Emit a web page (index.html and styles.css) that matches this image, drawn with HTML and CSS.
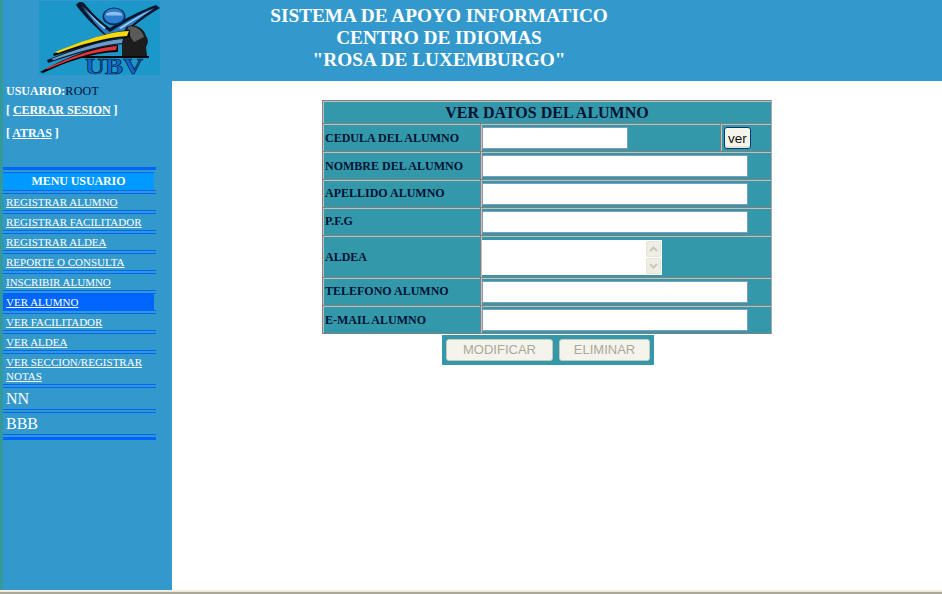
FILE: index.html
```html
<!DOCTYPE html>
<html lang="es">
<head>
<meta charset="utf-8">
<title>Ver datos del alumno</title>
<link rel="stylesheet" href="styles.css">
</head>
<body>
<div class="page">
  <header class="top">
    <svg class="logo" viewBox="39 1 121 74" width="121" height="74" role="img" aria-label="UBV">
      <rect x="39" y="1" width="121" height="74" fill="#1b98c9"/>
      <path d="M76 5 C78 2 81 1 84 3 C92 13 101 22 110 28 C124 19 142 10 156 5 L160 8 C148 15 134 25 122 36 L108 38 C96 28 84 16 76 5Z" fill="#08162e"/>
      <path d="M81 5 C90 15 100 25 110 32 C124 23 140 13 155 8 C142 16 130 26 120 36 L109 37 C98 28 89 16 81 5Z" fill="#2a7cc6"/>
      <path d="M83 6 C90 14 98 22 106 28 L104 29 C96 22 89 14 83 6Z M153 9 C142 14 130 21 119 28 L121 29 C131 22 143 15 153 9Z" fill="#a4cdea"/>
      <ellipse cx="114" cy="16.500" rx="11.500" ry="9" fill="#0b2a5a"/>
      <ellipse cx="114" cy="16" rx="10" ry="7.500" fill="#2b7fce"/>
      <path d="M106 14 C109 11 119 11 122 14 L122 15.500 L106 15.500Z" fill="#8fc0ea"/>
      <path d="M126 27 C135 23 144 28 146 36 C149 40 148 44 146 47 L147 56 L122 56 L122 38Z" fill="#1d1d1d"/>
      <path d="M128 27 C135 25 142 30 144 37 L134 42 C130 37 128 32 128 27Z" fill="#5a5a5a"/>
      <path d="M53 54 C74 45 104 32 130 30 L130 37 C106 39 78 48 54 56Z" fill="#0a0a0a"/>
      <path d="M55 52 C76 44 104 32 129 31 L127 36 C106 37 80 45 58 53Z" fill="#f4d90e"/>
      <path d="M47 60 C70 50 100 39 124 38 L123 44 C100 46 72 55 48 63Z" fill="#0b1a2e"/>
      <path d="M51 59 C72 51 100 41 123 39 L122 43 C100 45 74 53 54 60Z" fill="#6a9ccb"/>
      <path d="M40 72 C62 60 92 46 118 45 L118 52 C94 52 66 62 43 73Z" fill="#090909"/>
      <path d="M45 69 C64 60 92 48 117 46 L116 50 C94 51 68 60 48 69Z" fill="#e2343c"/>
      <rect x="83" y="56" width="66" height="2" fill="#090909"/>
      <text class="logo-mark" x="85" y="73.500" textLength="58" lengthAdjust="spacingAndGlyphs">UBV</text>
    </svg>
    <h1 class="system-title">SISTEMA DE APOYO INFORMATICO<br>CENTRO DE IDIOMAS<br>"ROSA DE LUXEMBURGO"</h1>
  </header>
  <div class="body-row">
    <aside class="side">
      <div class="user"><strong>USUARIO:</strong><span class="user-name">ROOT</span></div>
      <div class="session">[ <a href="#">CERRAR SESION</a> ]</div>
      <div class="session back">[ <a href="#">ATRAS</a> ]</div>
      <nav class="menu">
        <div class="menu-title">MENU USUARIO</div>
        <a class="menu-item" href="#">REGISTRAR ALUMNO</a>
        <a class="menu-item" href="#">REGISTRAR FACILITADOR</a>
        <a class="menu-item" href="#">REGISTRAR ALDEA</a>
        <a class="menu-item" href="#">REPORTE O CONSULTA</a>
        <a class="menu-item" href="#">INSCRIBIR ALUMNO</a>
        <a class="menu-item active" href="#">VER ALUMNO</a>
        <a class="menu-item" href="#">VER FACILITADOR</a>
        <a class="menu-item" href="#">VER ALDEA</a>
        <a class="menu-item tall" href="#">VER SECCION/REGISTRAR NOTAS</a>
        <div class="menu-item big">NN</div>
        <div class="menu-item big">BBB</div>
        <div class="menu-end"></div>
      </nav>
    </aside>
    <main class="content">
      <table class="form-table">
        <colgroup><col class="c1"><col class="c2"><col class="c3"></colgroup>
        <tr class="r-title"><th colspan="3">VER DATOS DEL ALUMNO</th></tr>
        <tr><td class="label low">CEDULA DEL ALUMNO</td><td><input class="field short" type="text"></td><td class="btn-cell"><button class="ver" type="button">ver</button></td></tr>
        <tr><td class="label low">NOMBRE DEL ALUMNO</td><td colspan="2"><input class="field" type="text"></td></tr>
        <tr><td class="label">APELLIDO ALUMNO</td><td colspan="2"><input class="field" type="text"></td></tr>
        <tr><td class="label">P.F.G</td><td colspan="2"><input class="field" type="text"></td></tr>
        <tr class="r-area"><td class="label low">ALDEA</td><td colspan="2">
          <div class="area">
            <textarea class="area-text"></textarea>
            <div class="scroll">
              <span class="scroll-btn"><svg viewBox="0 0 9 6" width="9" height="6"><path d="M1 5 L4.500 1.500 L8 5" fill="none" stroke="#c9c7ba" stroke-width="2"/></svg></span>
              <span class="scroll-btn"><svg viewBox="0 0 9 6" width="9" height="6"><path d="M1 1 L4.500 4.500 L8 1" fill="none" stroke="#c9c7ba" stroke-width="2"/></svg></span>
            </div>
          </div>
        </td></tr>
        <tr><td class="label">TELEFONO ALUMNO</td><td colspan="2"><input class="field" type="text"></td></tr>
        <tr><td class="label low">E-MAIL ALUMNO</td><td colspan="2"><input class="field" type="text"></td></tr>
      </table>
      <div class="actions">
        <button class="act mod" type="button" disabled>MODIFICAR</button>
        <button class="act del" type="button" disabled>ELIMINAR</button>
      </div>
    </main>
  </div>
  <footer class="bottom"></footer>
</div>
</body>
</html>
```

FILE: styles.css
```css
* { box-sizing: border-box; }
html, body { margin: 0; padding: 0; height: 100%; overflow: hidden; background: #fff; }
body { font-family: "Liberation Serif", "Times New Roman", serif; }

.page { width: 942px; height: 594px; display: flex; flex-direction: column; }

.top {
  height: 81px;
  flex: none;
  background: #3399cc;
  border-left: 3px solid #339999;
  display: flex;
  padding: 1px 0 0 36px;
}
.logo { display: block; flex: none; overflow: visible; }
.logo-mark {
  font-family: "Liberation Serif", serif;
  font-weight: 700;
  font-size: 23px;
  fill: #0b6ad8;
  stroke: #050d1a;
  stroke-width: .6px;
}
.system-title {
  width: 558px;
  margin: 4px 0 0;
  text-align: center;
  color: #fff;
  font-size: 19.3px;
  line-height: 22px;
  font-weight: 700;
}

.body-row { flex: 1; display: flex; min-height: 0; }

.side {
  width: 172px;
  flex: none;
  background: #3399cc;
  border-left: 3px solid #339999;
  padding: 3px 0 0;
  color: #fff;
  font-size: 12px;
}
.user { line-height: 14px; padding-left: 3px; }
.user-name { color: #001133; letter-spacing: .3px; }
.session { font-weight: 700; line-height: 14px; margin-top: 5px; padding-left: 3px; letter-spacing: -.05px; }
.session a { color: #fff; }
.session.back { margin-top: 9px; }

.menu {
  width: 153px;
  margin-top: 27px;
  border-top: 3px solid #0066ff;
  padding-top: 2px;
}
.menu-title {
  width: 151px;
  height: 18px;
  border-top: 1px solid #0066ff;
  background: #0099ff;
  text-align: center;
  font-weight: 700;
  line-height: 17px;
  letter-spacing: -.1px;
}
.menu-item {
  display: block;
  height: 20px;
  padding: 2px 0 0 3px;
  border-top: 1px solid #0066ff;
  color: #fff;
  font-size: 11px;
  line-height: 14px;
}
.menu-item::before {
  content: "";
  display: block;
  height: 1px;
  margin: 0 0 1px -3px;
  background: #0066ff;
}
.active {
  background: linear-gradient(#0066ff, #0066ff) 0 3px / 151px 16px no-repeat;
}
.tall { height: 34px; }
.big { height: 25px; font-size: 16px; line-height: 20px; }
.menu-end {
  height: 6px;
  border-top: 1px solid #0066ff;
  border-bottom: 3px solid #0066ff;
}

.content { flex: 1; min-width: 0; padding: 19px 0 0 150px; }

.form-table {
  width: 450px;
  table-layout: fixed;
  border-collapse: separate;
  border-spacing: 0;
  background: #3399aa;
  border-right: 1px solid #a8a8a8;
  border-bottom: 1px solid #808080;
  color: #001133;
}
.c1 { width: 158px; }
.c3 { width: 51px; }
.form-table td,
.form-table th {
  height: 28px;
  padding: 1px 0 0 1px;
  border-top: 1px solid #808080;
  border-left: 1px solid #808080;
  box-shadow: inset 1px 1px 0 #c0c0c0;
  vertical-align: middle;
}
.form-table .r-title th {
  height: 23px;
  padding: 1px 0 0;
  font-size: 16px;
  line-height: 18px;
  text-align: center;
}
.form-table .r-area td { height: 42px; }
.form-table td.label {
  padding: 0 0 0 2px;
  font-size: 12px;
  font-weight: 700;
  white-space: nowrap;
}
.form-table td.low { padding-top: 1px; }
.form-table td.btn-cell { padding-left: 3px; }

.field {
  display: block;
  width: 266px;
  height: 22px;
  margin: 0;
  padding: 1px 2px;
  border: 1px solid #7f9db9;
  background: #fff;
}
.field.short { width: 146px; }

.ver {
  display: block;
  width: 27px;
  height: 22px;
  padding: 0;
  border: 1px solid #003c74;
  border-radius: 3px;
  background: #f5f4ea;
  box-shadow: inset 0 -2px 0 #e6e4d6;
  color: #111;
  font: 13.5px "Liberation Sans", Arial, sans-serif;
}

.area { display: flex; width: 180px; height: 35px; }
.area-text {
  display: block;
  width: 163px;
  height: 35px;
  margin: 0;
  padding: 0;
  border: 0;
  background: #fff;
  resize: none;
  outline: none;
}
.scroll {
  display: flex;
  flex-direction: column;
  gap: 1px;
  width: 17px;
  height: 35px;
  padding: 1px;
  background: #fff;
}
.scroll-btn {
  flex: 1;
  display: flex;
  align-items: center;
  justify-content: center;
  background: #eeeee4;
  border: 1px solid #e6e5da;
  border-radius: 2px;
}

.actions {
  display: flex;
  gap: 6px;
  width: 212px;
  height: 30px;
  margin: 1px 0 0 120px;
  padding: 4px;
  background: #3399aa;
}
.act {
  height: 22px;
  padding: 0 0 2px;
  border: 1px solid #c9c7ba;
  border-radius: 3px;
  background: #f4f4ec;
  color: #aca899;
  font: 13px "Liberation Sans", Arial, sans-serif;
}
.mod { width: 107px; }
.del { width: 91px; }

.bottom {
  flex: none;
  height: 4px;
  background: #ece9d8;
  border-top: 1px solid #f4f2e6;
  border-bottom: 2px solid #aca899;
}
```
